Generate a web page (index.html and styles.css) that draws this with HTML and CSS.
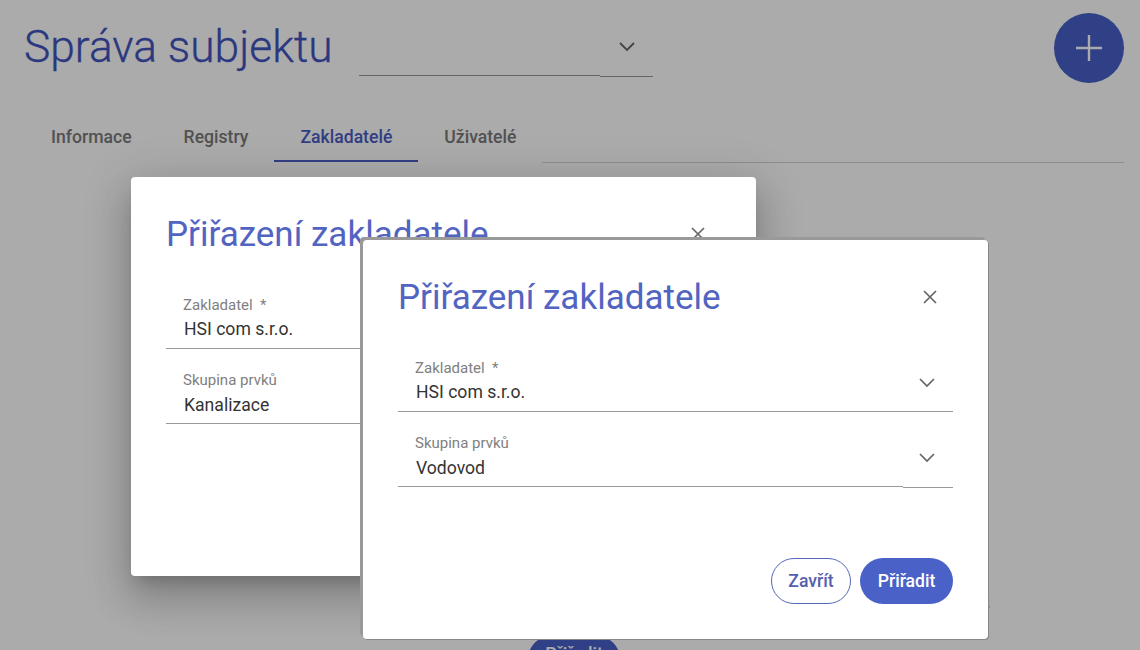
FILE: index.html
```html
<!DOCTYPE html>
<html lang="cs">
<head>
<meta charset="utf-8">
<title>Správa subjektu</title>
<link rel="stylesheet" href="styles.css">
</head>
<body>
<div class="page">
  <header class="head">
    <h1 class="page-title">Správa subjektu</h1>
    <div class="subject-select">
      <span class="subject-input"></span>
      <span class="subject-arrow">
        <svg viewBox="0 0 16 10" width="16" height="10"><path d="M1 1l7 7 7-7" fill="none" stroke="currentColor" stroke-width="1.8"/></svg>
      </span>
    </div>
    <button class="fab" type="button" aria-label="Přidat">
      <svg viewBox="0 0 26 26" width="26" height="26"><path d="M13 0v26M0 13h26" fill="none" stroke="currentColor" stroke-width="2.4"/></svg>
    </button>
  </header>
  <nav class="tabs">
    <a class="tab">Informace</a>
    <a class="tab">Registry</a>
    <a class="tab active">Zakladatelé</a>
    <a class="tab">Uživatelé</a>
    <span class="tabs-rest"></span>
  </nav>
  <div class="under">
    <span class="under-count">8</span>
    <button class="under-btn" type="button">Přiřadit</button>
  </div>
</div>
<div class="backdrop"></div>

<section class="dialog dialog-back">
  <div class="dialog-head">
    <h2 class="dialog-title">Přiřazení zakladatele</h2>
    <svg class="close" viewBox="0 0 14 14" width="14" height="14"><path d="M1 1l12 12M13 1L1 13" fill="none" stroke="currentColor" stroke-width="1.7"/></svg>
  </div>
  <div class="field">
    <div class="field-main">
      <div class="field-label">Zakladatel&nbsp; *</div>
      <div class="field-value">HSI com s.r.o.</div>
    </div>
    <div class="field-arrow">
      <svg viewBox="0 0 16 10" width="16" height="10"><path d="M1 1l7 7 7-7" fill="none" stroke="currentColor" stroke-width="1.7"/></svg>
    </div>
  </div>
  <div class="field field-second">
    <div class="field-main">
      <div class="field-label">Skupina prvků</div>
      <div class="field-value">Kanalizace</div>
    </div>
    <div class="field-arrow">
      <svg viewBox="0 0 16 10" width="16" height="10"><path d="M1 1l7 7 7-7" fill="none" stroke="currentColor" stroke-width="1.7"/></svg>
    </div>
  </div>
</section>

<section class="dialog dialog-front">
  <div class="dialog-head">
    <h2 class="dialog-title">Přiřazení zakladatele</h2>
    <svg class="close" viewBox="0 0 14 14" width="14" height="14"><path d="M1 1l12 12M13 1L1 13" fill="none" stroke="currentColor" stroke-width="1.7"/></svg>
  </div>
  <div class="field">
    <div class="field-main">
      <div class="field-label">Zakladatel&nbsp; *</div>
      <div class="field-value">HSI com s.r.o.</div>
    </div>
    <div class="field-arrow">
      <svg viewBox="0 0 16 10" width="16" height="10"><path d="M1 1l7 7 7-7" fill="none" stroke="currentColor" stroke-width="1.7"/></svg>
    </div>
  </div>
  <div class="field field-second">
    <div class="field-main">
      <div class="field-label">Skupina prvků</div>
      <div class="field-value">Vodovod</div>
    </div>
    <div class="field-arrow">
      <svg viewBox="0 0 16 10" width="16" height="10"><path d="M1 1l7 7 7-7" fill="none" stroke="currentColor" stroke-width="1.7"/></svg>
    </div>
  </div>
  <div class="actions">
    <button class="btn btn-outline" type="button">Zavřít</button>
    <button class="btn btn-solid" type="button">Přiřadit</button>
  </div>
</section>
</body>
</html>
```

FILE: styles.css
```css
* { box-sizing: border-box; }
html, body { margin: 0; height: 650px; overflow: hidden; }
body {
  position: relative;
  width: 1140px;
  background: #fff;
  font-family: Roboto, "Liberation Sans", sans-serif;
  color: #333;
}
.page { height: 650px; padding: 13px 16px 0 24px; overflow: hidden; }
.head { display: flex; align-items: flex-start; height: 70px; }
.page-title {
  margin: 0;
  width: 335px;
  font-size: 44.3px;
  font-weight: 300;
  line-height: 68px;
  color: #4052bd;
  -webkit-text-stroke: 0.3px #4052bd;
  white-space: nowrap;
}
.subject-select { display: flex; width: 294px; height: 64px; }
.subject-input { width: 241px; height: 63px; border-bottom: 1px solid #999; }
.subject-arrow {
  display: flex;
  justify-content: center;
  width: 53px;
  height: 64px;
  padding-top: 29px;
  border-bottom: 1px solid #999;
  color: #666;
}
.fab {
  display: flex;
  align-items: center;
  justify-content: center;
  margin-left: auto;
  width: 70px;
  height: 70px;
  padding: 0;
  border: 0;
  border-radius: 50%;
  background: #4760c9;
  color: #fff;
}
.tabs { display: flex; margin-top: 27px; height: 52px; padding-left: 1px; }
.tab {
  display: flex;
  align-items: center;
  padding: 1px 26px 0;
  font-size: 17.6px;
  font-weight: 500;
  color: #7a7a7a;
  white-space: nowrap;
}
.tab.active { color: #4a5cc4; box-shadow: inset 0 -2px 0 #4a5cc4; }
.tabs-rest { flex: 1; height: 53px; border-bottom: 1px solid #d2d2d2; }
.under { display: flex; flex-direction: column; align-items: center; padding-top: 431px; }
.under-count {
  align-self: flex-end;
  margin-right: 134px;
  font-size: 18px;
  line-height: 22px;
  color: #222;
}
.under-btn {
  width: 92px;
  height: 46px;
  margin-top: 21px;
  padding: 0 0 10px;
  border: 0;
  border-radius: 23px;
  background: #4760c9;
  color: #fff;
  font: 500 17.6px Roboto, sans-serif;
}
.backdrop { position: absolute; inset: 0; background: rgba(0, 0, 0, .33); }
.dialog {
  position: absolute;
  width: 625px;
  height: 399px;
  padding: 35px;
  background: #fff;
  border-radius: 4px;
}
.dialog-back {
  left: 131px;
  top: 177px;
  box-shadow: 0 11px 15px -7px rgba(0,0,0,.2), 0 24px 38px 3px rgba(0,0,0,.14), 0 9px 46px 8px rgba(0,0,0,.12);
}
.dialog-front {
  left: 363px;
  top: 240px;
  box-shadow: -3px -3px 0 0 #999, 1px 1px 0 0 #888;
}
.dialog-head { display: flex; align-items: center; justify-content: space-between; height: 44px; margin-bottom: 18px; padding-right: 16px; }
.dialog-title {
  margin: 2px 0 0;
  font-size: 35px;
  font-weight: 400;
  line-height: 44px;
  color: #5264c2;
  white-space: nowrap;
}
.close { color: #666; }
.field { display: flex; align-items: flex-start; height: 75px; }
.field-main { flex: 1; height: 75px; padding: 21px 0 0 17px; border-bottom: 1px solid #999; }
.field-label { font-size: 15px; line-height: 20px; color: #808080; }
.field-value { padding-left: 1px; margin-top: 3px; font-size: 17.6px; line-height: 22px; color: #333; }
.field-second .field-value { margin-top: 4px; }
.field-arrow {
  display: flex;
  justify-content: center;
  width: 50px;
  height: 75px;
  padding: 41px 2px 0 0;
  border-bottom: 1px solid #999;
  color: #666;
}
.field-second .field-arrow { height: 76px; }
.actions { display: flex; justify-content: flex-end; gap: 9px; margin-top: 71px; }
.btn {
  height: 46px;
  padding: 0;
  border-radius: 23px;
  font: 500 17.6px Roboto, sans-serif;
}
.btn-outline { width: 80px; background: #fff; border: 1px solid #5568b8; color: #5660ae; }
.btn-solid { width: 93px; background: #4a62c8; border: 0; color: #fff; }
```
